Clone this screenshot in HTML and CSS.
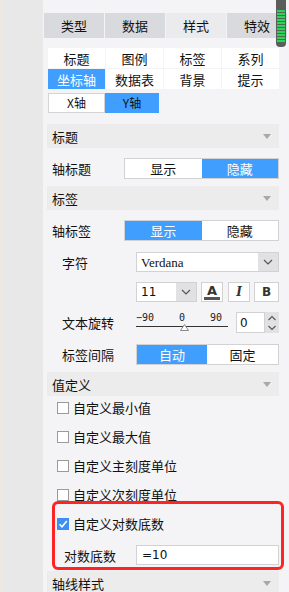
FILE: index.html
```html
<!DOCTYPE html>
<html>
<head>
<meta charset="utf-8">
<link rel="stylesheet" href="styles.css">
</head>
<body>
<div class="sidebar"></div>
<div class="panel">
  <div class="tabs">
    <div class="tab">类型</div>
    <div class="tab">数据</div>
    <div class="tab active">样式</div>
    <div class="tab">特效</div>
  </div>
  <div class="subgrid">
    <div class="sub">标题</div>
    <div class="sub">图例</div>
    <div class="sub">标签</div>
    <div class="sub">系列</div>
    <div class="sub on">坐标轴</div>
    <div class="sub">数据表</div>
    <div class="sub">背景</div>
    <div class="sub">提示</div>
  </div>
  <div class="axes">
    <div class="axis">X轴</div>
    <div class="axis on">Y轴</div>
  </div>

  <div class="head">标题<span class="tri"></span></div>
  <div class="row r-title">
    <div class="lab lab-a">轴标题</div>
    <div class="toggle t-wide"><span>显示</span><span class="on">隐藏</span></div>
  </div>

  <div class="head">标签<span class="tri"></span></div>
  <div class="row r-lab">
    <div class="lab lab-a">轴标签</div>
    <div class="toggle t-wide"><span class="on">显示</span><span>隐藏</span></div>
  </div>
  <div class="row r-font">
    <div class="lab lab-b">字符</div>
    <div class="select sel-font"><span class="val serif">Verdana</span><span class="arrow"><svg width="10" height="6" viewBox="0 0 10 6"><path d="M1 1 L5 5 L9 1" fill="none" stroke="#555" stroke-width="1.2"/></svg></span></div>
  </div>
  <div class="row r-size">
    <div class="lab lab-b"></div>
    <div class="select sel-size"><span class="val">11</span><span class="arrow"><svg width="10" height="6" viewBox="0 0 10 6"><path d="M1 1 L5 5 L9 1" fill="none" stroke="#555" stroke-width="1.2"/></svg></span></div>
    <div class="btn b-color"><span class="a">A</span><span class="bar"></span></div>
    <div class="btn b-i">I</div>
    <div class="btn b-b">B</div>
  </div>
  <div class="row r-rot">
    <div class="lab lab-b">文本旋转</div>
    <div class="slider">
      <div class="ticks"><span>−90</span><span>0</span><span>90</span></div>
      <div class="line"></div>
      <svg class="knob" width="9" height="7" viewBox="0 0 9 7"><path d="M4.5 0.5 L8.5 6.5 L0.5 6.5 Z" fill="#fff" stroke="#888" stroke-width="1"/></svg>
    </div>
    <div class="num"><span class="nv">0</span><span class="spin"><svg width="10" height="18" viewBox="0 0 10 18"><path d="M1.5 6 L5 2.5 L8.5 6" fill="none" stroke="#555" stroke-width="1.1"/><path d="M1.5 12 L5 15.5 L8.5 12" fill="none" stroke="#555" stroke-width="1.1"/></svg></span></div>
  </div>
  <div class="row r-gap">
    <div class="lab lab-b">标签间隔</div>
    <div class="toggle t-narrow"><span class="on">自动</span><span>固定</span></div>
  </div>

  <div class="head h-val">值定义<span class="tri"></span></div>
  <div class="checks">
    <div class="chk"><span class="box"></span>自定义最小值</div>
    <div class="chk"><span class="box"></span>自定义最大值</div>
    <div class="chk"><span class="box"></span>自定义主刻度单位</div>
    <div class="chk"><span class="box"></span>自定义次刻度单位</div>
    <div class="chk"><span class="box checked"><svg width="12" height="12" viewBox="0 0 12 12"><path d="M2.5 6.2 L5 8.7 L9.8 3" fill="none" stroke="#fff" stroke-width="1.6"/></svg></span>自定义对数底数</div>
  </div>
  <div class="row r-base">
    <div class="lab lab-c">对数底数</div>
    <div class="input">=10</div>
  </div>
  <div class="head h-line">轴线样式<span class="tri"></span></div>

  <div class="mark"></div>
  <div class="scroll"><div class="stripes"></div></div>
</div>
</body>
</html>
```

FILE: styles.css
```css
html, body {
  margin: 0;
  padding: 0;
}
body {
  width: 289px;
  height: 592px;
  overflow: hidden;
  display: flex;
  font-family: "Noto Sans CJK SC", "Noto Sans", sans-serif;
  font-size: 13px;
  color: #111;
  background: #f4f4f6;
}
.sidebar {
  width: 41px;
  flex: none;
  background: #e8e8e8;
  border-left: 2px solid #efe8dc;
}
.panel {
  position: relative;
  flex: 1;
  min-width: 0;
  background: #f4f4f6;
  padding: 13px 10px 0 4px;
}
.tabs {
  display: flex;
  gap: 1px;
  margin-left: -3px;
  height: 25px;
  width: 243px;
}
.tab {
  width: 60px;
  flex: none;
  background: #d9dadd;
  display: flex;
  align-items: center;
  justify-content: center;
  line-height: 1;
}
.tab.active {
  background: #ebebed;
}
.subgrid {
  margin: 10px 0 0 1px;
  display: grid;
  grid-template-columns: repeat(4, 1fr);
  grid-auto-rows: 20px;
  gap: 1px;
  width: 231px;
}
.sub {
  background: #fff;
  display: flex;
  align-items: center;
  justify-content: center;
  line-height: 1;
}
.sub.on {
  background: #409eff;
  color: #fff;
}
.axes {
  display: flex;
  margin: 4px 0 0 1px;
  height: 20px;
}
.axis {
  display: flex;
  align-items: center;
  justify-content: center;
  line-height: 1;
  width: 57px;
  box-sizing: border-box;
  background: #fff;
  border: 1px solid #d4d4d4;
  font-size: 12px;
}
.axis.on {
  width: 54px;
  background: #409eff;
  border-color: #409eff;
}
.head {
  position: relative;
  margin-top: 11px;
  height: 24px;
  background: #ececec;
  display: flex;
  align-items: center;
  padding-left: 5px;
  line-height: 1;
}
.tri {
  position: absolute;
  right: 8px;
  top: 10px;
  width: 0;
  height: 0;
  border-left: 4px solid transparent;
  border-right: 4px solid transparent;
  border-top: 5px solid #a8a8a8;
}
.row {
  display: flex;
  align-items: center;
}
.lab {
  flex: none;
  line-height: 1;
}
.lab-a {
  padding-left: 5px;
  width: 72px;
}
.lab-b {
  padding-left: 15px;
  width: 74px;
}
.lab-c {
  padding-left: 17px;
  width: 72px;
}
.r-title {
  margin-top: 10px;
  height: 21px;
}
.r-title + .head {
  margin-top: 7px;
}
.r-lab {
  margin-top: 10px;
  height: 21px;
}
.toggle {
  display: flex;
  height: 21px;
  box-sizing: border-box;
  border: 1px solid #d2d2d2;
  background: #fff;
  flex: 1;
}
.toggle span {
  flex: 1;
  display: flex;
  align-items: center;
  justify-content: center;
  line-height: 1;
}
.toggle span.on {
  background: #409eff;
  color: #fff;
}
.t-narrow span:first-child {
  flex: 0 0 70px;
}
.r-font {
  margin-top: 11px;
  height: 20px;
}
.select {
  display: flex;
  height: 20px;
  box-sizing: border-box;
  border: 1px solid #d2d2d2;
  background: #fff;
}
.sel-font {
  flex: 1;
}
.val {
  flex: 1;
  display: flex;
  align-items: center;
  padding-left: 4px;
  line-height: 1;
  font-family: "DejaVu Sans", sans-serif;
  font-size: 12px;
}
.val.serif {
  font-family: "Liberation Serif", serif;
  font-size: 13px;
  padding-left: 4px;
}
.arrow {
  width: 20px;
  flex: none;
  background: #e1e1e3;
  display: flex;
  align-items: center;
  justify-content: center;
}
.r-size {
  margin-top: 10px;
  height: 20px;
}
.sel-size {
  width: 61px;
  flex: none;
  margin-right: 4px;
}
.btn {
  height: 20px;
  box-sizing: border-box;
  border: 1px solid #d2d2d2;
  background: #fff;
  display: flex;
  align-items: center;
  justify-content: center;
  flex: none;
  line-height: 1;
}
.b-color {
  width: 22px;
  flex-direction: column;
  margin-right: 5px;
}
.b-color .a {
  font-family: "DejaVu Sans", sans-serif;
  font-weight: bold;
  font-size: 13px;
  color: #333;
  line-height: 11px;
}
.b-color .bar {
  width: 16px;
  height: 3px;
  background: #555;
  margin-top: 1px;
}
.b-i {
  width: 22px;
  margin-right: 4px;
  font-family: "DejaVu Serif", serif;
  font-style: italic;
  font-weight: bold;
  font-size: 12px;
  color: #333;
}
.b-b {
  flex: 1;
  font-family: "DejaVu Sans", sans-serif;
  font-weight: bold;
  font-size: 12px;
  color: #333;
}
.r-rot {
  margin-top: 10px;
  height: 21px;
}
.slider {
  position: relative;
  width: 92px;
  height: 21px;
  flex: none;
  margin-right: 8px;
}
.ticks {
  display: flex;
  justify-content: space-between;
  font-family: "DejaVu Sans Mono", monospace;
  font-size: 10px;
  line-height: 1;
  color: #222;
  padding: 1px 6px 0 0;
}
.line {
  position: absolute;
  left: 0;
  right: 0;
  top: 14px;
  height: 1px;
  background: #333;
}
.knob {
  position: absolute;
  left: 44px;
  top: 12px;
}
.num {
  display: flex;
  flex: 1;
  height: 21px;
}
.nv {
  width: 29px;
  box-sizing: border-box;
  border: 1px solid #d2d2d2;
  background: #fff;
  display: flex;
  align-items: center;
  padding-left: 3px;
  font-family: "DejaVu Sans", sans-serif;
  font-size: 12px;
  line-height: 1;
}
.spin {
  flex: 1;
  background: #e1e1e3;
  display: flex;
  align-items: center;
  justify-content: center;
}
.r-gap {
  margin-top: 11px;
  height: 21px;
}
.h-val {
  margin-top: 7px;
}
.checks {
  margin-top: -3px;
  padding-left: 10px;
}
.chk {
  height: 29px;
  display: flex;
  align-items: center;
  line-height: 1;
}
.box {
  width: 12px;
  height: 12px;
  box-sizing: border-box;
  border: 1px solid #9a9a9a;
  background: #fff;
  margin-right: 4px;
  flex: none;
  display: flex;
}
.box.checked {
  background: #3d8ff2;
  border-color: #3d8ff2;
}
.box svg {
  margin: -1px;
}
.r-base {
  margin-top: 7px;
  height: 20px;
}
.input {
  flex: 1;
  height: 20px;
  box-sizing: border-box;
  border: 1px solid #d2d2d2;
  background: #fff;
  display: flex;
  align-items: center;
  padding-left: 5px;
  font-family: "DejaVu Sans", sans-serif;
  font-size: 12px;
  line-height: 1;
}
.h-line {
  margin-top: 6px;
}
.mark {
  position: absolute;
  left: 9px;
  top: 501px;
  width: 232px;
  height: 69px;
  box-sizing: border-box;
  border: 3px solid #ff2424;
  border-radius: 6px;
}
.scroll {
  position: absolute;
  left: 233px;
  top: 0;
  width: 10px;
  height: 47px;
  background: #5c5c5c;
  border-radius: 0 0 4px 4px;
}
.stripes {
  position: absolute;
  left: 1px;
  right: 1px;
  top: 10px;
  height: 33px;
  background: repeating-linear-gradient(to bottom, #2fd15a 0, #2fd15a 2px, #4a6a52 2px, #4a6a52 3px);
}
```
